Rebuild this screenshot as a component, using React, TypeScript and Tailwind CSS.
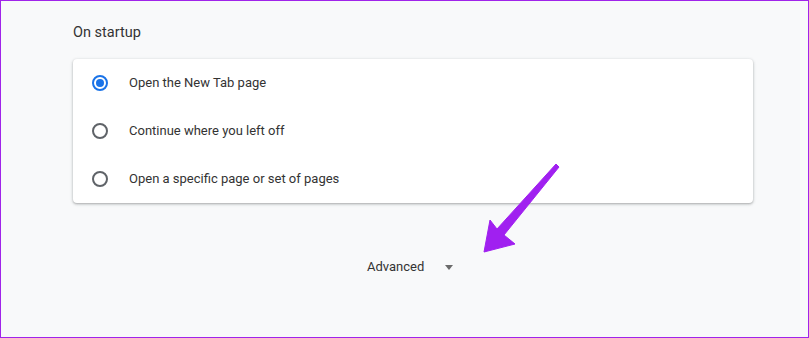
const options = [
  { label: 'Open the New Tab page', checked: true },
  { label: 'Continue where you left off', checked: false },
  { label: 'Open a specific page or set of pages', checked: false },
]

function Radio({ checked }: { checked: boolean }) {
  if (checked) {
    return (
      <span className="flex h-4 w-4 shrink-0 items-center justify-center rounded-full border-2 border-[#1a73e8]">
        <span className="h-2 w-2 rounded-full bg-[#1a73e8]" />
      </span>
    )
  }
  return <span className="h-4 w-4 shrink-0 rounded-full border-2 border-[#5f6368]" />
}

export default function App() {
  return (
    <div
      className="relative h-[338px] w-[809px] overflow-hidden border border-[#a024ea] bg-[#f8f9fa] text-[13px] text-[#202124]"
      style={{ fontFamily: 'Roboto, "Liberation Sans", sans-serif' }}
    >
      <div className="flex flex-col pl-[72px] pr-[55px] pt-[22px]">
        <h2 className="h-5 text-[14.5px] leading-5 font-normal text-[#333]">On startup</h2>
        <div className="mt-[16px] w-[680px] rounded-[4px] bg-white shadow-[0_1px_2px_rgba(60,64,67,0.3),0_1px_3px_1px_rgba(60,64,67,0.12)]">
          {options.map((o) => (
            <div key={o.label} className="flex h-12 items-center gap-[21px] pl-[19px]">
              <Radio checked={o.checked} />
              <span className="text-[#333]">{o.label}</span>
            </div>
          ))}
        </div>
        <div className="mt-[54px] flex h-5 items-center pl-[294px]">
          <span className="text-[#333]">Advanced</span>
          <span className="ml-[21px] h-0 w-0 border-x-[4px] border-t-[5px] border-x-transparent border-t-[#6b6b6b]" />
        </div>
      </div>
      <svg className="absolute left-0 top-0" width="809" height="338" viewBox="0 0 809 338">
        <polygon
          points="555,163 558,166 503,234 514,243 483,251 489,219 496,228"
          fill="#a020f0"
          stroke="#a020f0"
          strokeWidth="1"
          strokeLinejoin="round"
        />
      </svg>
    </div>
  )
}
